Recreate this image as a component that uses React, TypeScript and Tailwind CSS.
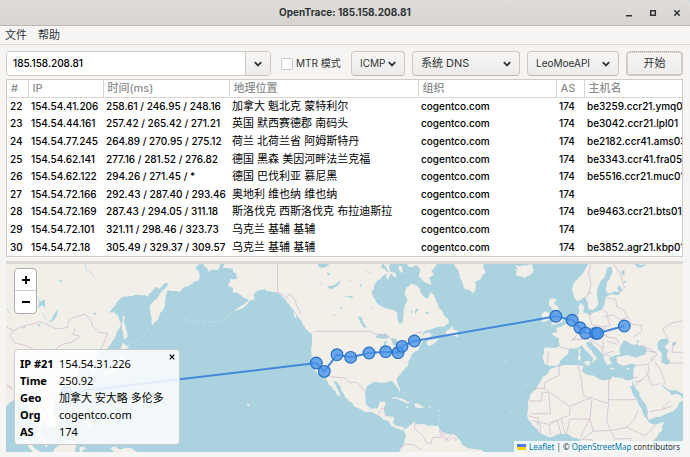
import { useState } from "react";
import type { ReactNode } from "react";

type Hop = [number, string, string, string, string];

const HOPS: Hop[] = [
  [22, "154.54.41.206", "258.61 / 246.95 / 248.16", "加拿大 魁北克 蒙特利尔", "be3259.ccr21.ymq01"],
  [23, "154.54.44.161", "257.42 / 265.42 / 271.21", "英国 默西赛德郡 南码头", "be3042.ccr21.lpl01"],
  [24, "154.54.77.245", "264.89 / 270.95 / 275.12", "荷兰 北荷兰省 阿姆斯特丹", "be2182.ccr41.ams03"],
  [25, "154.54.62.141", "277.16 / 281.52 / 276.82", "德国 黑森 美因河畔法兰克福", "be3343.ccr41.fra05"],
  [26, "154.54.62.122", "294.26 / 271.45 / *", "德国 巴伐利亚 慕尼黑", "be5516.ccr21.muc01"],
  [27, "154.54.72.166", "292.43 / 287.40 / 293.46", "奥地利 维也纳 维也纳", ""],
  [28, "154.54.72.169", "287.43 / 294.05 / 311.18", "斯洛伐克 西斯洛伐克 布拉迪斯拉", "be9463.ccr21.bts01"],
  [29, "154.54.72.101", "321.11 / 298.46 / 323.73", "乌克兰 基辅 基辅", ""],
  [30, "154.54.72.18", "305.49 / 329.37 / 309.57", "乌克兰 基辅 基辅", "be3852.agr21.kbp01"],
];

const COLUMNS: [string, string][] = [
  ["#", "w-[21px]"],
  ["IP", "w-[75px]"],
  ["时间(ms)", "w-[126px]"],
  ["地理位置", "w-[189px]"],
  ["组织", "w-[138px]"],
  ["AS", "w-[28px]"],
  ["主机名", ""],
];

const DETAILS: [string, string][] = [
  ["IP #21", "154.54.31.226"],
  ["Time", "250.92"],
  ["Geo", "加拿大 安大略 多伦多"],
  ["Org", "cogentco.com"],
  ["AS", "174"],
];

// Coastlines are kept coarse and given small bays and capes when drawn.
function coast(points: string, amount = 0.13): string {
  let list = points.split(" ").map((p) => p.split(",").map(Number));
  let seed = 7;
  const random = () => {
    seed = (seed * 16807) % 2147483647;
    return seed / 2147483647 - 0.5;
  };
  for (let pass = 0; pass < 2; pass++) {
    const next: number[][] = [];
    list.forEach((a, i) => {
      const b = list[(i + 1) % list.length];
      const dx = b[0] - a[0];
      const dy = b[1] - a[1];
      const far = Math.hypot(dx, dy) > 75;
      const k = far ? 0 : random() * amount * 2;
      next.push(a, [(a[0] + b[0]) / 2 - dy * k, (a[1] + b[1]) / 2 + dx * k]);
    });
    list = next;
  }
  return "M" + list.map(([x, y]) => `${x.toFixed(1)},${y.toFixed(1)}`).join("L") + "Z";
}

const PACIFIC_LAND = [
  "0,0 600,0 602,20 588,30 600,51 596,69 582,74 570,84 555,88 540,104 528,100 515,101 505,98 500,109 498,122 495,134 497,145 490,159 480,170 472,189 458,202 456,188 452,169 451,152 455,139 465,128 475,119 482,108 490,97 500,90 505,75 495,78 487,85 480,94 470,88 460,99 448,109 446,118 436,112 425,113 400,115 375,117 362,124 350,139 338,152 330,164 345,164 355,174 362,194 362,210 350,234 338,250 325,271 305,277 290,295 285,315 290,345 275,350 268,320 245,310 225,315 240,345 230,385 200,420 165,440 160,460 178,490 170,505 150,510 130,490 122,520 145,560 140,570 118,535 110,500 95,465 85,440 60,425 38,430 18,446 0,450",
  "370,172 376,182 374,195 379,215 385,238 374,247 371,225 366,205",
  "370,255 378,262 391,268 376,275 372,282 360,278 366,268",
  "366,288 374,305 362,330 340,345 315,354 312,345 345,328 358,300",
  "250,450 262,455 265,480 278,500 265,510 252,490",
  "70,540 95,555 125,583 135,600 110,600 88,570",
  "160,583 185,560 215,545 230,565 220,600 165,600",
  "240,568 262,572 248,580 255,600 240,600",
  "332,571 350,567 362,575 385,570 410,580 420,600 380,600 345,585",
  "610,0 612,24 622,30 628,44 640,35 655,38 662,24 654,0",
];

const AMERICA_LAND = [
  "0,0 -15,19 -20,31 10,34 10,44 20,54 0,60 2,72 -5,84 10,89 10,104 25,106 35,112 44,121 57,127 42,142 20,156 -8,173 22,159 47,146 62,128 75,124 72,112 84,99 105,94 122,102 142,104 155,112 168,126 180,142 190,155 205,178 218,194 230,209 243,220 247,250 244,278 246,305 252,325 262,345 285,355 295,372 310,393 322,412 334,418 325,395 312,370 322,374 340,405 358,430 375,448 405,462 430,464 450,475 475,490 485,505 500,512 520,518 525,507 505,505 492,500 493,478 468,475 462,460 470,435 450,432 443,452 425,455 408,440 405,405 412,385 435,372 465,375 478,370 490,372 500,385 510,403 512,395 500,365 515,345 535,325 535,312 545,290 565,278 570,265 585,248 600,238 610,230 598,225 575,238 588,218 612,212 640,208 656,198 656,184 640,169 627,149 620,134 615,119 605,104 598,118 590,124 575,109 572,94 560,82 545,77 530,89 525,109 533,129 523,154 520,194 510,199 502,164 475,154 440,134 425,104 435,79 450,66 460,54 474,50 468,38 455,30 450,0",
  "470,0 480,40 496,44 500,62 484,48 474,68 468,58 476,42 462,22",
  "530,0 532,24 550,28 560,22 572,40 568,58 585,74 604,82 598,60 612,50 604,38 620,24 625,0",
  "506,26 518,28 522,46 510,42",
  "648,222 660,214 666,202 670,215 688,224 684,238 668,234 646,234",
  "590,255 610,245 628,240 622,250 605,262 596,266",
  "485,424 498,417 516,422 530,431 545,437 528,436 512,428 498,422",
  "553,440 566,437 585,447 572,451 558,449",
  "528,447 538,448 532,452",
  "597,446 607,447 600,450",
  "508,600 514,568 524,556 528,530 522,516 538,504 556,490 558,500 580,498 600,504 625,503 632,518 650,528 672,530 688,545 698,562 718,572 738,574 765,584 770,600",
  "54,438 60,442 57,447 52,441",
  "216,196 240,214 256,227 250,230 230,216",
  "190,164 198,168 204,184 196,180",
];

const EUROPE_LAND = [
  "-18,0 -16,19 -4,40 0,59 8,75 15,94 28,97 40,107 48,88 46,72 62,66 68,52 76,46 70,30 78,0",
  "160,32 174,42 166,24 180,26 198,23 214,18 222,38 212,52 195,62 176,56 166,50 172,42",
  "268,128 278,122 290,124 282,138 296,150 296,168 312,182 308,195 290,200 268,204 282,192 270,184 284,170 276,152 268,142",
  "245,174 258,160 270,166 266,188 246,194",
  "388,0 384,22 374,39 360,56 345,72 337,92 342,119 352,131 366,124 375,115 382,132 388,156 402,156 416,134 412,99 420,75 436,52 440,34 455,28 458,40 449,65 437,92 445,108 480,101 478,112 440,116 434,140 426,158 404,164 388,174 370,164 374,148 364,136 356,150 358,170 336,180 322,196 304,208 290,210 292,222 276,228 298,242 300,266 276,270 254,268 252,285 248,302 254,318 270,326 298,318 306,304 325,288 328,272 346,272 365,262 376,278 388,290 400,302 395,318 404,310 412,302 398,284 382,266 378,254 394,254 410,270 430,290 434,308 442,322 456,318 448,302 466,292 480,290 478,278 492,258 560,270 556,290 530,300 500,292 470,298 472,314 490,324 510,318 528,322 520,345 517,368 524,386 545,425 564,464 568,487 600,478 650,450 670,425 660,412 644,408 634,412 612,392 597,372 608,378 625,394 650,398 680,410 720,410 720,0",
  "516,366 500,368 478,360 458,356 448,368 424,368 402,354 378,350 366,340 370,324 340,322 300,325 275,332 262,350 250,356 240,375 228,396 212,410 204,430 206,450 202,470 210,490 224,508 240,528 262,536 300,528 322,528 342,540 364,544 362,562 368,600 545,600 560,578 590,540 614,492 580,500 564,490 548,462 532,428 508,386 518,384",
  "372,312 392,312 388,326 376,320",
  "356,275 362,275 362,290 357,290",
  "354,294 364,294 362,308 355,308",
  "449,332 468,333 460,336",
  "500,334 512,330 506,337",
  "-10,552 4,562 40,578 50,600 -20,600",
];

const EUROPE_WATER = [
  "480,278 482,262 492,248 505,254 514,262 534,258 528,250 540,248 532,260 558,278 552,288 526,288 506,284 488,286",
  "592,256 606,244 622,240 626,256 614,264 624,278 620,296 632,316 620,322 604,316 606,292 594,274",
  "472,92 480,84 488,96 478,102",
  "490,72 500,70 498,78",
  "516,18 534,30 552,26 560,18 540,22 528,14",
  "484,42 494,38 496,56 488,52",
  "640,252 650,256 644,266 636,262",
  "388,102 394,106 390,112",
];

const AMERICA_WATER = [
  "436,240 452,230 464,226 480,238 462,244",
  "464,252 472,250 468,280 462,274",
  "484,244 500,244 506,258 492,264",
  "264,22 276,16 300,18 290,28 270,30",
  "294,90 306,84 320,78 334,68 322,86 306,96",
  "386,178 398,180 402,196 412,210 400,208 392,196",
  "352,116 374,118 364,122",
  "290,44 304,52 296,54",
  "330,150 340,152 334,155",
  "560,152 566,158 558,170 556,160",
  "585,166 600,162 594,170",
  "544,160 550,164 544,168",
  "390,80 398,84 394,90",
  "0,45 20,48 25,62 8,66 -4,58",
];

const ROUTE: [number, number][] = [
  [200, 405], [950, 316], [974, 341], [1012, 291], [1053, 299], [1108, 286], [1158, 282], [1195, 285],
  [1207, 266], [1244, 250], [1668, 176], [1717, 188], [1740, 210], [1757, 226], [1787, 227], [1793, 227], [1873, 205],
];

function WorldMap() {
  return (
    <svg viewBox="20 18 2029 566" preserveAspectRatio="xMidYMid slice" className="block h-full w-full bg-[#aad3df]" role="img" aria-label="Map">
      <g fill="#f2efe9">
        {PACIFIC_LAND.map((p) => <path key={p} d={coast(p)} />)}
        <g transform="translate(690 0)">{AMERICA_LAND.map((p) => <path key={p} d={coast(p)} />)}</g>
        <g transform="translate(1380 0)">{EUROPE_LAND.map((p) => <path key={p} d={coast(p)} />)}</g>
      </g>
      <g fill="#aad3df">
        <path d="M140,197Q158,190 163,174L175,154Q176,176 160,190Z" />
        <path d="M278,168l14,-3l-4,7zM178,66l12,4l-8,5zM68,208l10,-2l-3,8zM114,200l10,-1l-4,8zM116,118l6,14l14,-6l2,26l-10,-10l-12,10l4,-18z" />
        <g transform="translate(690 0)">{AMERICA_WATER.map((p) => <path key={p} d={coast(p)} />)}</g>
        <g transform="translate(1380 0)">{EUROPE_WATER.map((p) => <path key={p} d={coast(p)} />)}</g>
      </g>
      <g fill="none" stroke="#aad3df" strokeWidth="2">
        <path d="M258,18l3,18l14,10l12,16M20,150l12,18M130,166l12,22" />
        <path d="M960,70l8,12M1030,120l14,-4M1045,65l12,8M1000,175l12,-6M1110,150l10,4M1100,40l14,6" />
      </g>
      <g fill="none" stroke="#f2efe9" strokeWidth="2" strokeDasharray="6 9">
        <path d="M512,157L522,166M552,184Q650,210 700,166M384,262Q430,242 452,210" />
        <path d="M1212,405L1232,425M1316,455Q1322,480 1316,498M1515,310l14,-2M1575,382l20,-4M1532,460l16,4" />
      </g>
      <g fill="none" stroke="#d2bfd0" strokeWidth="2.5" strokeLinejoin="round">
        <path d="M20,207l22,12l30,-14l30,-6l18,-7l22,8l28,14l34,-4l6,-26l26,-8l20,-6l16,12l8,24l18,18l26,3l-10,28l-14,28M42,220l-12,16l18,20l38,10l30,16l50,-6l22,-16l30,-6l24,-18l-22,-6l8,-20M20,378l20,14M20,385l22,10M110,430l20,-16l30,4l24,-10M120,440l22,28l8,28" />
        <g transform="translate(690 0)">
          <path d="M144,18V103l18,10l10,8l8,-12l18,20l2,14l12,18v8M256,221H422l14,8l28,2l20,12l20,24l26,-18l28,-22l20,-4M300,355l18,4l28,1l16,16l14,-4l16,10l14,20M444,472l12,-20l16,0M462,476l14,-8M556,494l-2,20l24,18l12,22l14,4l4,-18l28,-2l-8,-22M514,570l16,-12l24,4l22,16M636,518l8,24l14,6l12,-10l12,10" />
          <path d="M664,532l-14,12v8M684,540l-10,10" />
        </g>
        <g transform="translate(1380 0)">
          <path d="M392,20l-6,30l8,32l-14,38M460,20l20,26l14,46l-14,12M395,162l-6,18l8,22l32,6l22,-4l-6,-18l-4,-20l-10,-8M440,120l28,6l2,20l22,12l10,20l-20,8l-24,-14l-26,6M504,178l12,22l30,4l-2,18l-24,16M435,206l-8,18l18,14l24,4l10,18M408,206l-22,8l14,20l26,-6M356,176l-12,20l14,20l-8,18l-12,12l22,0l24,-2l20,10l22,16l4,20l24,6M348,236l-14,14M300,268l30,8M266,280l-4,38M358,246l24,-8l20,0M428,244l4,30M440,250l32,10M462,280l-26,8M420,226l24,12" />
          <path d="M544,262l32,16l18,12l-22,12l8,8M560,280l28,4M528,324l36,-4l4,26l-24,22l-20,6M564,320l20,-20M558,340l18,44l22,-6M585,312l18,28l14,40M632,316l36,0M622,240l-14,-26l28,-18l32,-6M640,254l-4,30l32,0M520,360l12,0M524,386l22,-22" />
          <path d="M298,326v26l-44,22v18h-32M206,430h40v-26h20M252,392l78,54l62,-26M354,324l8,28l8,60l24,14M392,420l54,18V362M446,426h82M266,406l6,62h-58M330,446v26l-34,14l-28,10M396,426l-6,58h-60M446,438l-6,52l12,28l46,-8l26,-26l10,-28M206,474l30,8l-4,22M218,488l22,6l2,34M240,494l28,6l4,32M272,500l20,-14l12,44M304,486l12,42M330,484l-10,44M390,484l-28,54M390,484l10,36l50,-2M400,520l-34,26h30l10,30M452,518l14,26l44,-2M498,508l22,10l36,16l30,-32M512,542l-4,32M568,462l36,-6l34,-12M604,456l24,-26" />
        </g>
      </g>
      <polyline points={ROUTE.map((p) => p.join(",")).join(" ")} fill="none" stroke="#4489dc" strokeWidth="6" strokeLinejoin="round" />
      {ROUTE.map(([x, y]) => (
        <circle key={x} cx={x} cy={y} r="17.5" fill="#4a94ea" fillOpacity=".8" stroke="#2470c4" strokeWidth="3.5" />
      ))}
    </svg>
  );
}

function Chevron() {
  return (
    <svg viewBox="0 0 10 8" className="pointer-events-none h-2 w-2.5" fill="none" stroke="#2e3436" strokeWidth="1.8" aria-hidden="true">
      <path d="M1.8 2.2 5 5.4 8.2 2.2" />
    </svg>
  );
}

function Picker({ label, look, children }: { label: string; look: string; children: ReactNode }) {
  return (
    <div className={`relative ${look}`}>
      <select
        aria-label={label}
        className="h-[25px] w-full appearance-none rounded-[4px] border border-[#cdc7c2] border-b-[#bfb8b1] bg-linear-to-b from-[#f7f6f5] to-[#edebe9] pr-4 pl-2 text-[#2e3436]"
      >
        {children}
      </select>
      <span className="pointer-events-none absolute inset-y-0 right-2 flex items-center">
        <Chevron />
      </span>
    </div>
  );
}

export default function App() {
  const [open, setOpen] = useState(true);
  return (
    <div className="min-h-screen bg-[#d5d9dc] font-['Inter','Noto_Sans_CJK_SC',sans-serif] text-[11px] text-[#2e3436]">
      <div className="flex min-h-screen flex-col overflow-hidden rounded-t-[6px] bg-[#f6f5f4]">
        <header className="grid h-[26px] shrink-0 grid-cols-[1fr_auto_1fr] items-center border-b border-[#bfb8b1] bg-linear-to-b from-[#e0dcd9] to-[#d8d4d0]">
          <h1 className="col-start-2 text-[10px] font-bold">OpenTrace: 185.158.208.81</h1>
          <div className="flex justify-end gap-2 pr-[5px]">
            <button aria-label="Minimize" className="flex h-4 w-4 items-center justify-center">
              <svg viewBox="0 0 8 8" className="h-2 w-2" stroke="#2e3436" strokeWidth="1.5"><path d="M1 6.7H7" /></svg>
            </button>
            <button aria-label="Maximize" className="flex h-4 w-4 items-center justify-center">
              <svg viewBox="0 0 8 8" className="h-2 w-2" fill="none" stroke="#2e3436" strokeWidth="1.5"><path d="M1.7 1.7H6.3V6.3H1.7Z" /></svg>
            </button>
            <button aria-label="Close" className="flex h-4 w-4 items-center justify-center">
              <svg viewBox="0 0 8 8" className="h-2 w-2" stroke="#2e3436" strokeWidth="1.5"><path d="M1.3 1.3 6.7 6.7M6.7 1.3 1.3 6.7" /></svg>
            </button>
          </div>
        </header>
        <nav className="flex h-[19px] shrink-0 items-center gap-[11px] border-b border-[#dcd8d5] px-[5px] pt-px">
          <button>文件</button>
          <button>帮助</button>
        </nav>
        <div className="flex shrink-0 items-center pt-[6px] pr-[7px] pb-[3px] pl-[6px]">
          <div className="flex h-[25px] min-w-0 flex-1 overflow-hidden rounded-[4px] border border-[#cdc7c2]">
            <input aria-label="Host" defaultValue="185.158.208.81" className="min-w-0 flex-1 bg-white pl-[6px] text-[10px] font-medium text-black outline-none" />
            <button aria-label="History" className="flex w-[25px] items-center justify-center border-l border-[#cdc7c2] bg-linear-to-b from-[#f7f6f5] to-[#edebe9]">
              <Chevron />
            </button>
          </div>
          <label className="ml-[10px] flex w-[60px] items-center gap-[3px] text-[10px] whitespace-nowrap">
            <input type="checkbox" className="h-3 w-3 shrink-0 appearance-none rounded-[2px] border border-[#cdc7c2] bg-white checked:bg-[#3584e4]" />
            MTR 模式
          </label>
          <div className="ml-[10px] flex gap-[7px]">
            <Picker label="Protocol" look="w-[54px] text-[10px]"><option>ICMP</option></Picker>
            <Picker label="DNS" look="w-[108px]"><option>系统 DNS</option></Picker>
            <Picker label="API" look="w-[92px] text-[10px]"><option>LeoMoeAPI</option></Picker>
            <button className="h-[25px] w-[57px] rounded-[4px] border border-[#cdc7c2] bg-linear-to-b from-[#f7f6f5] to-[#edebe9] outline-1 -outline-offset-2 outline-[#b5b0ac] outline-dotted">
              开始
            </button>
          </div>
        </div>
        <section className="mr-[7px] ml-[6px] h-[178px] shrink-0 overflow-hidden border border-[#d0cbc7] bg-white">
          <table className="h-full w-full table-fixed border-collapse leading-[15px] text-black">
            <thead>
              <tr className="h-[17px] border-b border-[#d9d5d2] text-left text-[#8b8e8f]">
                {COLUMNS.map(([name, width]) => (
                  <th key={name} className={`${width} border-l border-[#d9d5d2] py-0 pl-1 font-medium first:border-l-0`}>{name}</th>
                ))}
              </tr>
            </thead>
            <tbody>
              {HOPS.map(([n, ip, time, place, host]) => (
                <tr key={n} className="text-[10px] whitespace-nowrap">
                  <td className="p-0 pl-[3px] font-medium">{n}</td>
                  <td className="p-0 pl-[3px] font-medium">{ip}</td>
                  <td className="p-0 pl-[3px] font-medium">{time}</td>
                  <td className="p-0 pl-[3px] text-[11px]">{place}</td>
                  <td className="p-0 pl-[3px] font-medium">cogentco.com</td>
                  <td className="p-0 pl-[3px] font-medium">174</td>
                  <td className="overflow-hidden p-0 pl-[3px] font-medium">{host}</td>
                </tr>
              ))}
            </tbody>
          </table>
        </section>
        <main className="relative mt-1 mr-[7px] mb-[6px] ml-[6px] h-[191px] grow overflow-hidden border-t-[3px] border-[#dcdad9] font-['Noto_Sans','Noto_Sans_CJK_SC',sans-serif]">
          <div className="absolute inset-0">
            <WorldMap />
          </div>
          <div className="absolute top-1 left-2 flex flex-col overflow-hidden rounded-[4px] border border-[#aaaeae] bg-white text-black">
            <button aria-label="Zoom in" className="flex h-[22px] w-[21px] items-center justify-center border-b border-[#cccccc]">
              <svg viewBox="0 0 10 10" className="h-2.5 w-2.5" stroke="currentColor" strokeWidth="1.8"><path d="M5 1V9M1 5H9" /></svg>
            </button>
            <button aria-label="Zoom out" className="flex h-[22px] w-[21px] items-center justify-center">
              <svg viewBox="0 0 10 10" className="h-2.5 w-2.5" stroke="currentColor" strokeWidth="1.8"><path d="M1 5H9" /></svg>
            </button>
          </div>
          {open && (
            <div className="absolute bottom-[7px] left-2 w-[166px] rounded-[4px] border border-[#c8cccd] bg-white/85 px-[5px] pt-[5px] pb-1 text-[11px] text-black">
              <table className="w-full leading-[17px]">
                <tbody>
                  {DETAILS.map(([name, value]) => (
                    <tr key={name}>
                      <th scope="row" className="w-[39px] p-0 text-left font-bold whitespace-nowrap">{name}</th>
                      <td className="p-0 whitespace-nowrap">{value}</td>
                    </tr>
                  ))}
                </tbody>
              </table>
              <button aria-label="Close details" onClick={() => setOpen(false)} className="absolute top-1 right-1 flex h-1.5 w-1.5">
                <svg viewBox="0 0 6 6" className="h-1.5 w-1.5" stroke="currentColor" strokeWidth="1.2"><path d="M.7.7 5.3 5.3M5.3.7.7 5.3" /></svg>
              </button>
            </div>
          )}
          <footer className="absolute right-0 bottom-0 flex h-[11px] items-center bg-white/80 px-[3px] text-[8px] leading-[11px] whitespace-pre text-[#333333]">
            <svg viewBox="0 0 9 6" className="mr-[3px] h-1.5 w-[9px]" aria-hidden="true">
              <path fill="#4c7be1" d="M0 0H9V3H0Z" />
              <path fill="#ffd500" d="M0 3H9V6H0Z" />
            </svg>
            <a href="#leaflet" className="text-[#0078a8]">Leaflet</a>
            {" | © "}
            <a href="#osm" className="text-[#0078a8]">OpenStreetMap</a>
            {" contributors"}
          </footer>
        </main>
      </div>
    </div>
  );
}
